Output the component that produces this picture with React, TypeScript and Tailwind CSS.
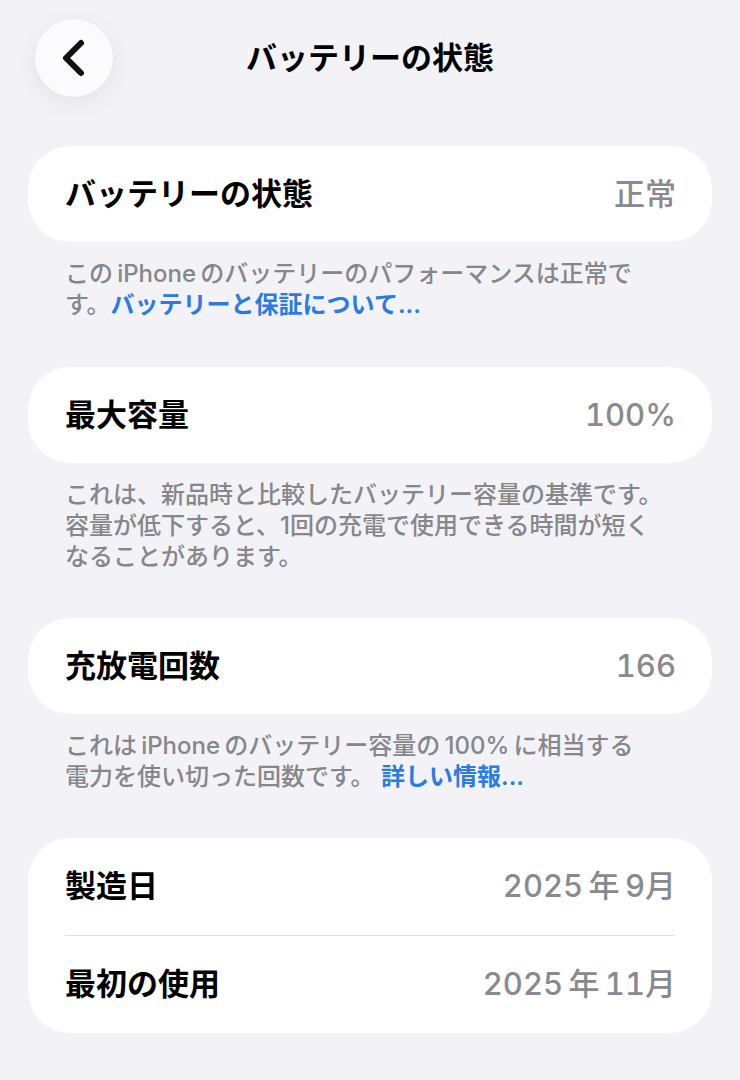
const font = { fontFamily: 'Inter, "Noto Sans CJK JP", sans-serif' };

function Row({ label, value, tall }: { label: string; value: string; tall?: boolean }) {
  return (
    <div
      className={`flex items-center justify-between pl-[37px] pr-[36px] ${tall ? "h-[97px]" : "h-[96px]"}`}
    >
      <span className="text-[31px] font-semibold text-black">{label}</span>
      <span className="text-[31px] font-medium tabular-nums text-[#8a8a8e]">{value}</span>
    </div>
  );
}

function Card({ children }: { children: React.ReactNode }) {
  return <div className="rounded-[42px] bg-white">{children}</div>;
}

function Note({ children }: { children: React.ReactNode }) {
  return (
    <p className="mt-4 pl-[37px] pr-[30px] text-[24px] font-medium leading-[31px] text-[#86868b]">
      {children}
    </p>
  );
}

function Link({ children }: { children: React.ReactNode }) {
  return <span className="font-semibold text-[#2a7be4]">{children}</span>;
}

export default function App() {
  return (
    <div className="min-h-[1080px] w-full bg-[#f2f2f7]" style={font}>
      <header className="grid grid-cols-[78px_1fr_78px] items-center px-[35px] pt-[19px]">
        <button className="flex h-[78px] w-[78px] items-center justify-center rounded-full bg-[#fbfbfd] shadow-[0_6px_24px_rgba(0,0,0,0.07)]">
          <svg width="30" height="40" viewBox="0 0 30 40" fill="none">
            <path
              d="M22 5 L7 20 L22 35"
              stroke="#111"
              strokeWidth="6"
              strokeLinecap="round"
              strokeLinejoin="round"
            />
          </svg>
        </button>
        <h1 className="text-center text-[31px] font-bold text-black">バッテリーの状態</h1>
        <div />
      </header>

      <main className="px-[28px] pt-[49px] pb-10">
        <Card>
          <Row label="バッテリーの状態" value="正常" />
        </Card>
        <Note>
          この{"\u2009"}iPhone{"\u2009"}のバッテリーのパフォーマンスは正常で
          <br />
          す。<Link>バッテリーと保証について...</Link>
        </Note>

        <div className="mt-[47px]">
          <Card>
            <Row label="最大容量" value="100%" />
          </Card>
        </div>
        <Note>
          これは、新品時と比較したバッテリー容量の基準です。
          <br />
          容量が低下すると、1回の充電で使用できる時間が短く
          <br />
          なることがあります。
        </Note>

        <div className="mt-[46px]">
          <Card>
            <Row label="充放電回数" value="166" />
          </Card>
        </div>
        <Note>
          これは{"\u2009"}iPhone{"\u2009"}のバッテリー容量の{"\u2009"}100%{"\u2009"}に相当する
          <br />
          電力を使い切った回数です。 <Link>詳しい情報...</Link>
        </Note>

        <div className="mt-[46px]">
          <Card>
            <Row tall label="製造日" value={"2025\u2009年\u20099月"} />
            <div className="mx-[37px] border-t border-[#e2e2e6]" />
            <Row tall label="最初の使用" value={"2025\u2009年\u200911月"} />
          </Card>
        </div>
      </main>
    </div>
  );
}
